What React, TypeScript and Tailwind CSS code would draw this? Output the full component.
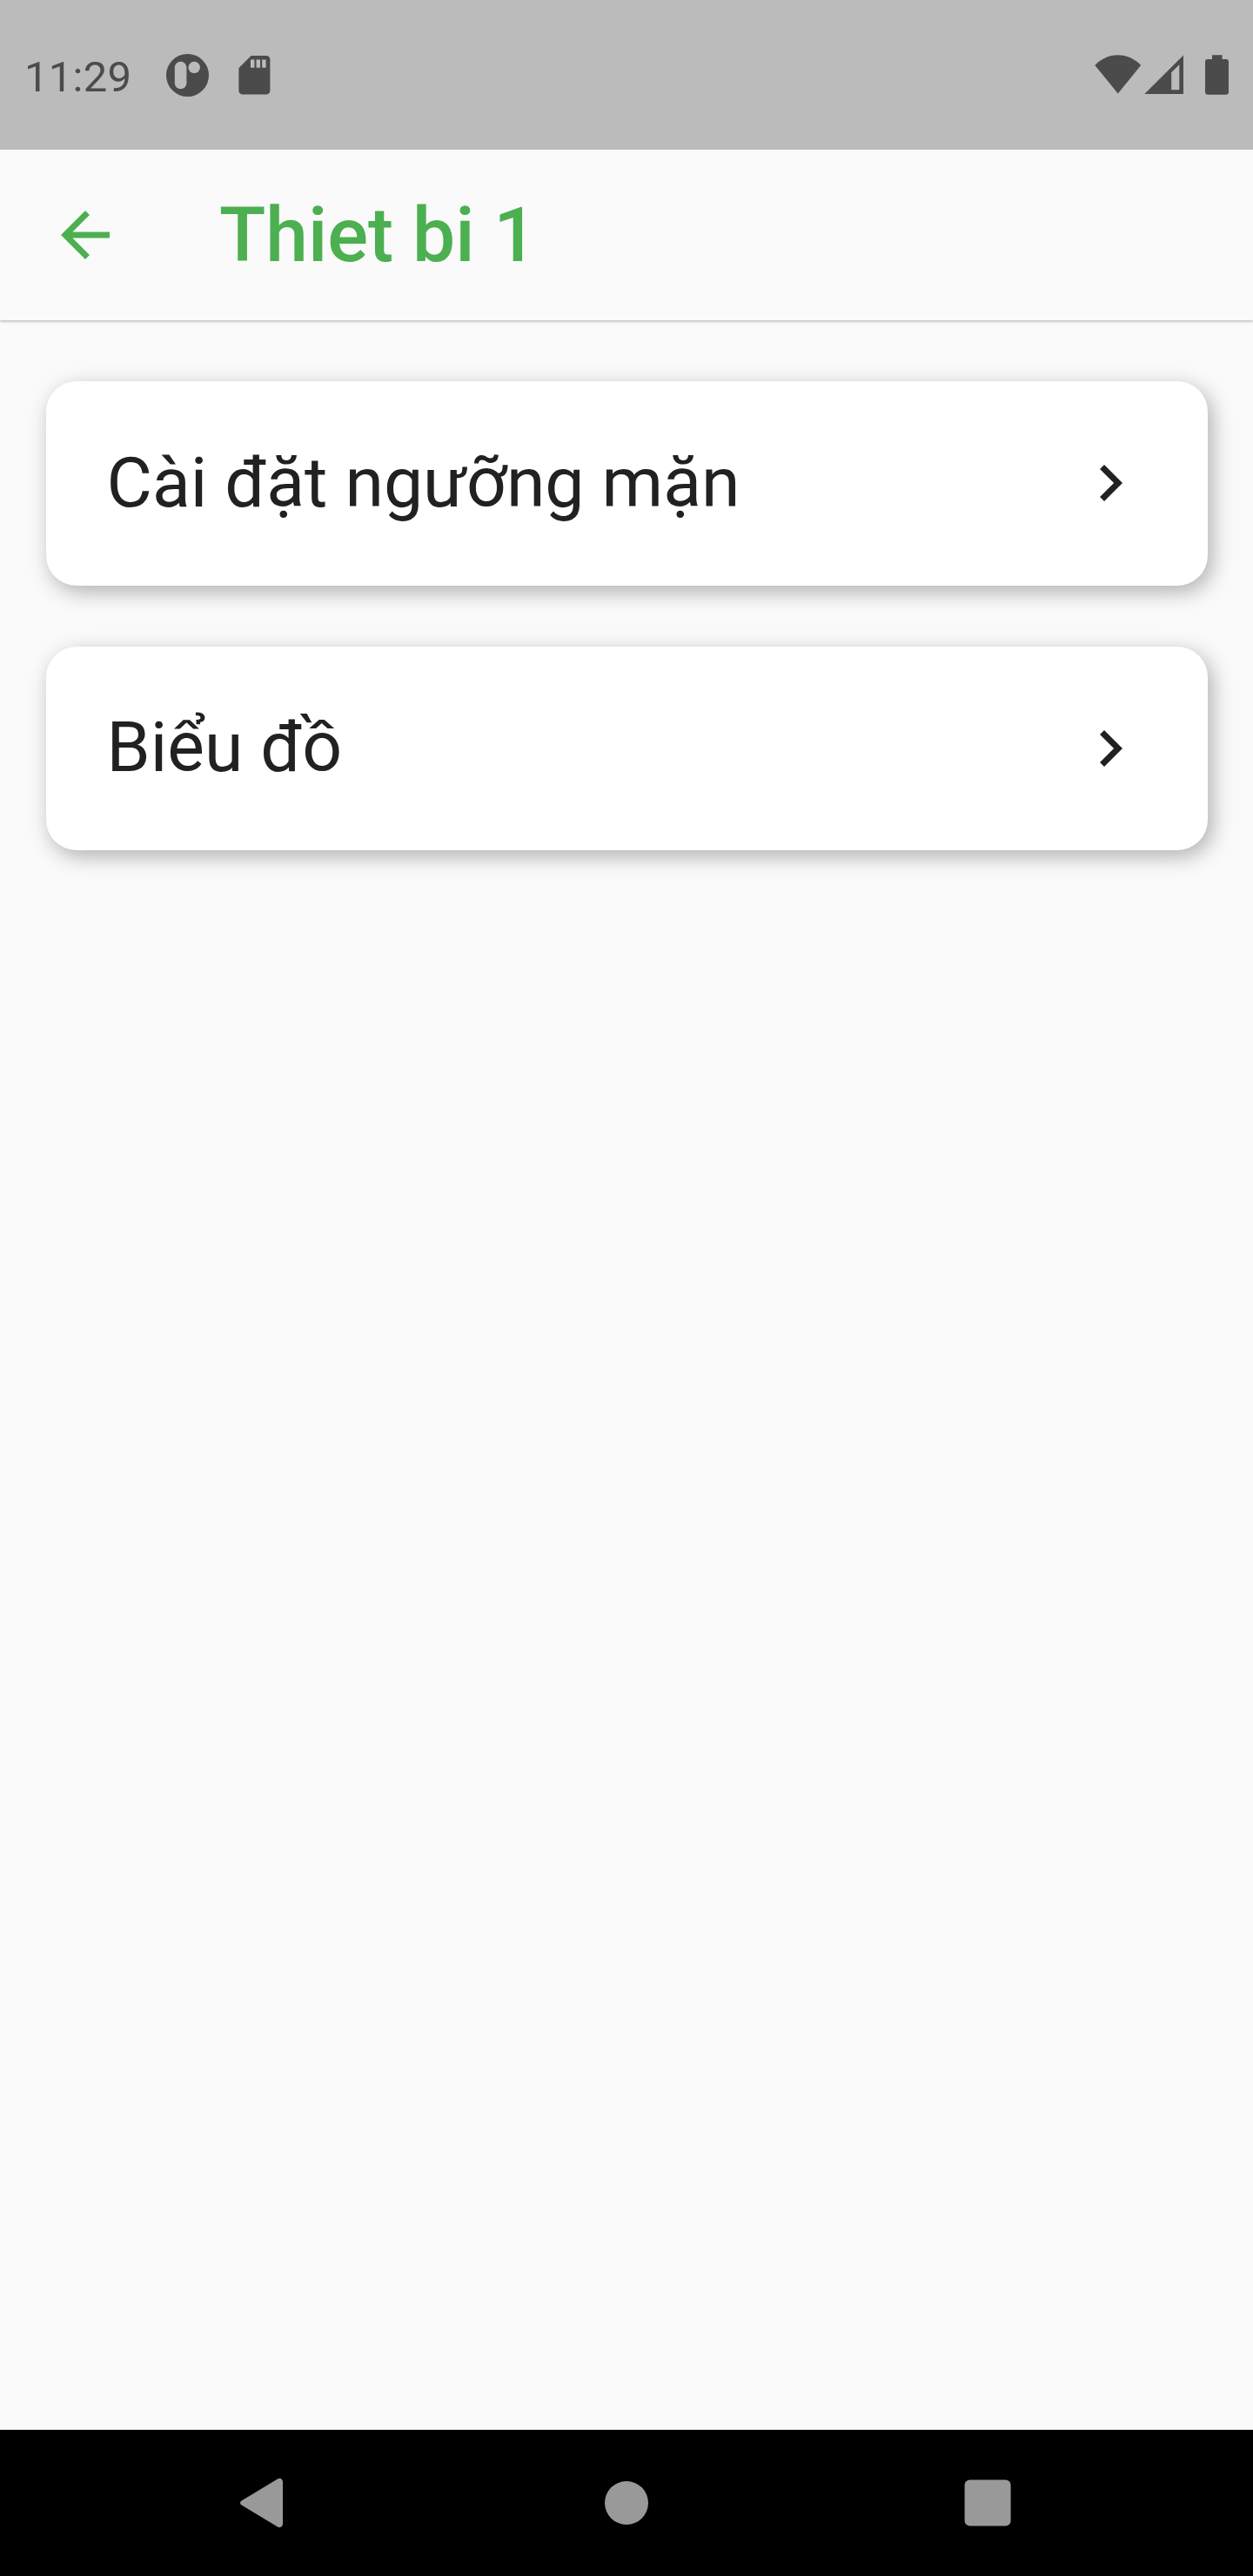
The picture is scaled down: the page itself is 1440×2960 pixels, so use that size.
function StatusBar() {
  return (
    <header className="flex h-[172px] items-center bg-[#bbbbbb] pl-7 pr-7 text-[#4b4b4b]">
      <span className="w-[163px] pt-[5px] text-[49px] leading-[58px] tracking-[0.25px]">11:29</span>
      <svg className="h-[49px] w-[49px] mt-px" viewBox="0 0 49 49" fill="currentColor" aria-hidden="true">
        <circle cx="24.5" cy="24.5" r="24.5" />
        <rect x="9.8" y="8.7" width="13.6" height="31.5" rx="6.8" fill="#bbbbbb" />
        <circle cx="32.2" cy="15.4" r="6.7" fill="#bbbbbb" />
      </svg>
      <svg className="ml-[34px] h-[46px] w-[37px]" viewBox="0 0 37 46" fill="currentColor" aria-hidden="true">
        <path
          fillRule="evenodd"
          d="M14.6 1H32a4.4 4.4 0 0 1 4.4 4.4v35.8a4.4 4.4 0 0 1-4.4 4.4H4.8a4.4 4.4 0 0 1-4.4-4.4V15.2zM14 5.6v9.2h4.4V5.6zm6.6 0v9.2H25V5.6zm6.6 0v9.2h4.4V5.6z"
        />
      </svg>
      <div className="ml-auto flex h-[46px] items-start">
        <svg className="h-[46px] w-[54px]" viewBox="0 0 54 46" fill="currentColor" aria-hidden="true">
          <path d="M0.3 12C7.5 4.5 17 0.3 26.8 0.3S46 4.5 53.2 12L26.8 44.5z" />
        </svg>
        <svg className="ml-[3px] h-[46px] w-[46px]" viewBox="0 0 46 46" fill="currentColor" aria-hidden="true">
          <path fillRule="evenodd" d="M45 0.5V45H0.3zM40.3 11.3L31.2 20.2V40.2H40.3z" />
        </svg>
        <svg className="ml-6 h-[46px] w-[27px]" viewBox="0 0 27 46" fill="currentColor" aria-hidden="true">
          <path d="M8 0.2h11.6v4.8h4.2A3.2 3.2 0 0 1 27 8.2v34.4a3.2 3.2 0 0 1-3.2 3.2H3.2A3.2 3.2 0 0 1 0 42.6V8.2A3.2 3.2 0 0 1 3.2 5H8z" />
        </svg>
      </div>
    </header>
  );
}

function AppBar() {
  return (
    <div className="relative flex h-[196px] items-center bg-[#fafafa] pl-14 text-[#4caf50] shadow-[0_1.5px_3px_rgba(0,0,0,0.26)]">
      <svg className="h-[84px] w-[84px]" viewBox="0 0 24 24" fill="currentColor" aria-label="Back">
        <path d="M20 11H7.83l5.59-5.59L12 4l-8 8 8 8 1.41-1.41L7.83 13H20v-2z" />
      </svg>
      <h1 className="ml-28 text-[87.5px] font-medium leading-[102px]">Thiet bi 1</h1>
    </div>
  );
}

function MenuCard({ label }: { label: string }) {
  return (
    <button className="flex h-[234.5px] w-full items-center justify-between rounded-[35px] bg-white px-[70px] text-[#212121] shadow-[5px_7px_25px_rgba(0,0,0,0.3)]">
      <span className="whitespace-nowrap pb-px text-[80.5px] leading-[94px]">{label}</span>
      <svg className="h-[84px] w-[84px]" viewBox="0 0 24 24" fill="currentColor" aria-hidden="true">
        <path d="M10 6L8.59 7.41 13.17 12l-4.58 4.59L10 18l6-6z" />
      </svg>
    </button>
  );
}

function NavigationBar() {
  return (
    <nav className="flex h-[168px] items-center justify-between bg-black px-[263px] text-[#999999]">
      <svg className="h-[84px] w-[84px]" viewBox="0 0 84 84" fill="currentColor" aria-label="Back">
        <path d="M15 39.2L56 14.4C59 12.8 62 14.8 62 18V66C62 69.2 59 71.2 56 69.6L15 44.8C12.4 43.2 12.4 40.8 15 39.2z" />
      </svg>
      <svg className="h-[84px] w-[84px]" viewBox="0 0 84 84" fill="currentColor" aria-label="Home">
        <circle cx="42" cy="42" r="25" />
      </svg>
      <svg className="h-[84px] w-[84px]" viewBox="0 0 84 84" fill="currentColor" aria-label="Recent apps">
        <rect x="15.6" y="15.4" width="53" height="53" rx="6" />
      </svg>
    </nav>
  );
}

export default function App() {
  return (
    <div className="flex h-[2960px] w-[1440px] flex-col overflow-hidden bg-[#fafafa] font-['Roboto',sans-serif]">
      <StatusBar />
      <AppBar />
      <main className="flex flex-1 flex-col gap-[70px] px-[52.5px] pt-[70px]">
        <MenuCard label="Cài đặt ngưỡng mặn" />
        <MenuCard label="Biểu đồ" />
      </main>
      <NavigationBar />
    </div>
  );
}
